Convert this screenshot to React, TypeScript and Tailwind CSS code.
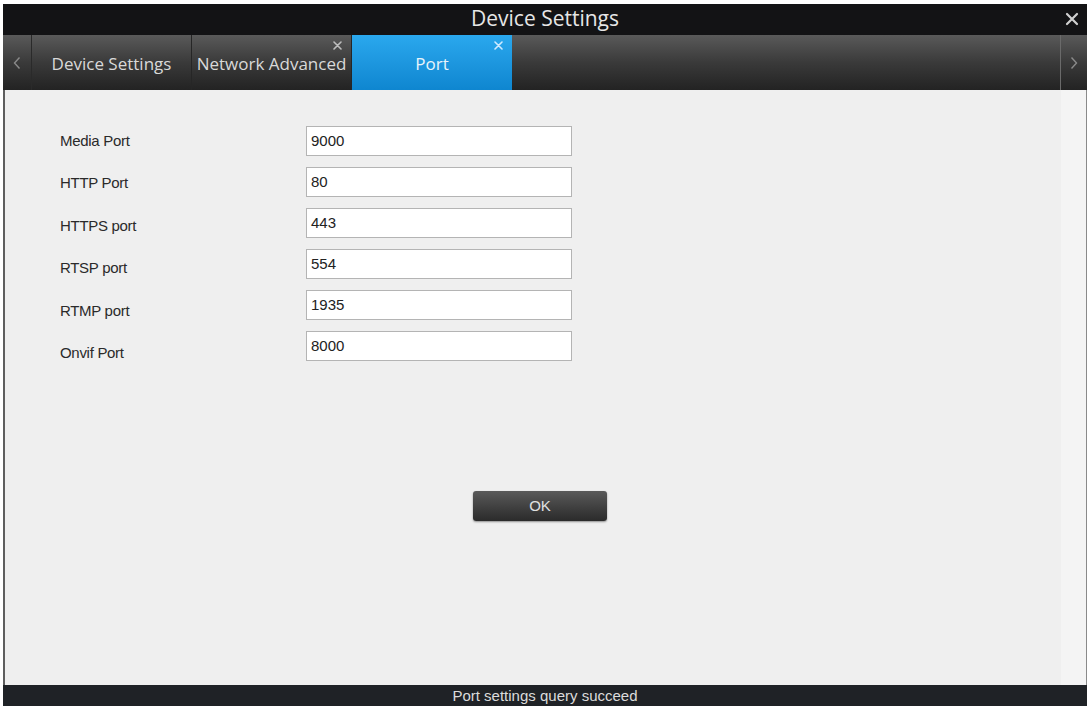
import React from "react";

const fields = [
  { label: "Media Port", value: "9000" },
  { label: "HTTP Port", value: "80" },
  { label: "HTTPS port", value: "443" },
  { label: "RTSP port", value: "554" },
  { label: "RTMP port", value: "1935" },
  { label: "Onvif Port", value: "8000" },
];

function TabX({ className = "" }: { className?: string }) {
  return (
    <svg width="9" height="9" viewBox="0 0 9 9" className={className}>
      <path d="M1 1 L8 8 M8 1 L1 8" stroke="currentColor" strokeWidth="1.6" strokeLinecap="round" />
    </svg>
  );
}

export default function App() {
  return (
    <div
      className="w-[1090px] h-[706px] bg-white pt-[4px] px-[3px] flex flex-col overflow-hidden"
      style={{ fontFamily: "'Liberation Sans', Arial, sans-serif" }}
    >
      {/* Title bar */}
      <div className="h-[31px] bg-[#131315] flex items-center relative shrink-0">
        <div
          className="flex-1 text-center text-[21px] text-[#e6e6e6] leading-none pb-[2px]"
          style={{ fontFamily: "'Open Sans', 'Noto Sans', sans-serif" }}
        >
          Device Settings
        </div>
        <div className="absolute right-[8px] top-[8px] text-[#d0d0d0]">
          <svg width="14" height="14" viewBox="0 0 14 14">
            <path d="M2 2 L12 12 M12 2 L2 12" stroke="currentColor" strokeWidth="2.2" strokeLinecap="round" />
          </svg>
        </div>
      </div>

      {/* Tab bar */}
      <div
        className="h-[55px] flex shrink-0 bg-gradient-to-b from-[#5a5a5a] via-[#3a3a3a] to-[#232323] text-[17px] text-[#d9d9d9]"
        style={{ fontFamily: "'Open Sans', 'Noto Sans', sans-serif" }}
      >
        <div className="w-[29px] flex items-center justify-center border-r border-[#2a2a2a] text-[#8a8a8a]">
          <svg width="8" height="14" viewBox="0 0 8 14">
            <path d="M6.5 1.5 L1.5 7 L6.5 12.5" fill="none" stroke="currentColor" strokeWidth="1.4" />
          </svg>
        </div>
        <div className="w-[160px] flex items-center justify-center border-r border-[#262626] pt-[2px]">
          Device Settings
        </div>
        <div className="w-[160px] flex items-center justify-center relative border-r border-[#262626] pt-[2px] whitespace-nowrap">
          <TabX className="absolute right-[9px] top-[6px] text-[#bdbdbd]" />
          Network Advanced
        </div>
        <div className="w-[160px] flex items-center justify-center relative bg-gradient-to-b from-[#2aa8ee] to-[#0e86d0] text-[#e8f4fb] pt-[2px]">
          <TabX className="absolute right-[9px] top-[6px] text-[#cfeaff]" />
          Port
        </div>
        <div className="flex-1" />
        <div className="w-[27px] flex items-center justify-center border-l border-[#6a6a6a] text-[#8a8a8a]">
          <svg width="8" height="14" viewBox="0 0 8 14">
            <path d="M1.5 1.5 L6.5 7 L1.5 12.5" fill="none" stroke="currentColor" strokeWidth="1.4" />
          </svg>
        </div>
      </div>

      {/* Content */}
      <div className="h-[595px] shrink-0 bg-[#efefef] border-l-2 border-[#5e5e5e] flex">
        <div className="flex-1 flex flex-col">
          <div className="pt-[36px] pl-[55px] flex flex-col gap-[11px]">
            {fields.map((f, i) => (
              <div key={f.label} className="flex items-center h-[30px]">
                <div
                  className="w-[246px] text-[15px] text-[#2a2a2a] tracking-[-0.3px]"
                  style={{ marginTop: `${i * 3}px` }}
                >
                  {f.label}
                </div>
                <div className="w-[266px] h-[30px] bg-white border border-[#b4b4b4] flex items-center pl-[4px] text-[15px] text-[#222]">
                  {f.value}
                </div>
              </div>
            ))}
          </div>
          <div className="mt-[130px] flex justify-center pl-[14px]">
            <div className="w-[134px] h-[30px] rounded-[3px] bg-gradient-to-b from-[#5a5a5a] to-[#2b2b2b] shadow-[0_1px_2px_rgba(0,0,0,0.4)] flex items-center justify-center text-[15px] text-[#e0e0e0]">
              OK
            </div>
          </div>
        </div>
        <div className="w-[26px] bg-[#f4f4f4] border-r border-[#8a8a8a]" />
      </div>

      {/* Status bar */}
      <div className="flex-1 bg-[#1f2226] flex items-center justify-center text-[15px] text-[#dcdcdc]">
        Port settings query succeed
      </div>
    </div>
  );
}
